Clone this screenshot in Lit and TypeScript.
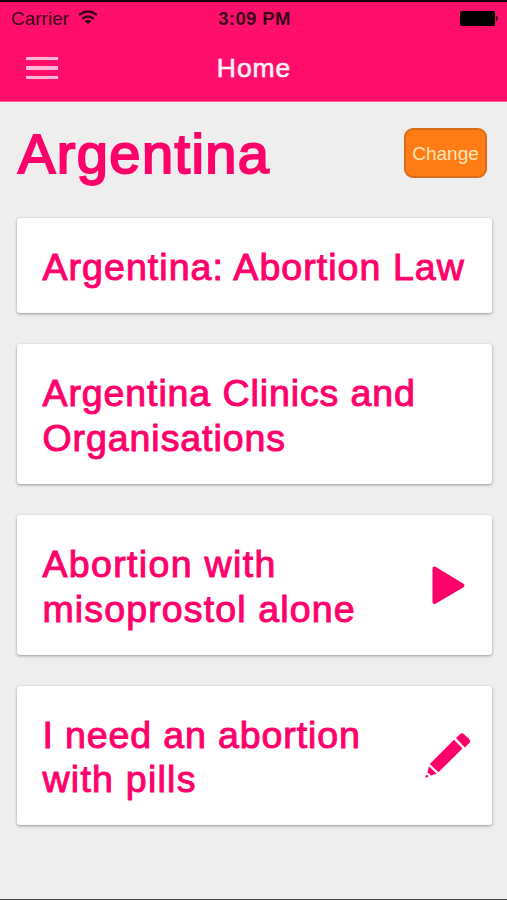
import { LitElement, html, css, svg, nothing } from "lit";
import { customElement, property } from "lit/decorators.js";
import { styleMap } from "lit/directives/style-map.js";

interface Line {
  text: string;
  tracking: number;
}

const playIcon = svg`<path d="M2.5 2.5 L30.5 19.5 L2.5 36 Z" stroke-width="4" stroke-linejoin="round" stroke="currentColor"/>`;
const pencilIcon = svg`
  <path d="M30 5 L34 1.2 Q36 -0.5 38 1.2 L43 5.8 Q45 8 43.3 10 L38.8 14.4 Z"/>
  <path d="M28 6.8 L36.5 15.5 L12.5 39.3 L3.8 31 Z"/>
  <path d="M3 33.3 L10.7 40.8 L4.7 42.6 Q3.8 40.4 1.4 39.8 Z"/>
  <circle cx="0.8" cy="43.2" r="1.3"/>`;

@customElement("topic-card")
class TopicCard extends LitElement {
  @property({ type: Array }) lines: Line[] = [];
  @property() icon = "";

  static styles = css`
    :host {
      display: flex;
      align-items: center;
      justify-content: space-between;
      box-sizing: border-box;
      padding: 27px 19.5px 23.5px 26px;
      background: #fff;
      border-radius: 3px;
      box-shadow: 0 1px 3px rgba(0, 0, 0, 0.38);
      color: #ff006b;
    }
    .title {
      font-size: 37.5px;
      -webkit-text-stroke: 1px #ff006b;
      white-space: nowrap;
    }
    .line { display: block; height: 44.5px; line-height: 44px; }
    svg { display: block; flex: none; overflow: visible; }
    .play { margin: 0 7.5px 3px 0; }
    .pencil { margin-bottom: 4px; }
  `;

  render() {
    return html`
      <div class="title">
        ${this.lines.map((l) => html`<span class="line" style=${styleMap({ letterSpacing: `${l.tracking}px` })}>${l.text}</span>`)}
      </div>
      ${this.icon === "play"
        ? html`<svg class="play" width="33" height="39" viewBox="0 0 33 39" fill="currentColor">${playIcon}</svg>`
        : this.icon === "pencil"
          ? html`<svg class="pencil" width="46" height="45" viewBox="0 0 46 45" fill="currentColor">${pencilIcon}</svg>`
          : nothing}
    `;
  }
}

const topics: { lines: Line[]; icon: string }[] = [
  { lines: [{ text: "Argentina: Abortion Law", tracking: 1.05 }], icon: "" },
  {
    lines: [
      { text: "Argentina Clinics and", tracking: 0.9 },
      { text: "Organisations", tracking: 0.93 },
    ],
    icon: "",
  },
  {
    lines: [
      { text: "Abortion with", tracking: 1.33 },
      { text: "misoprostol alone", tracking: 1.13 },
    ],
    icon: "play",
  },
  {
    lines: [
      { text: "I need an abortion", tracking: 0.88 },
      { text: "with pills", tracking: 1.25 },
    ],
    icon: "pencil",
  },
];

@customElement("app-root")
class AppRoot extends LitElement {
  static styles = css`
    :host {
      display: flex;
      flex-direction: column;
      box-sizing: border-box;
      height: 900px;
      background: #eee;
      border-bottom: 1px solid #444;
      font-family: "Liberation Sans", Arial, sans-serif;
      overflow: hidden;
    }
    header {
      box-sizing: border-box;
      height: 102px;
      flex: none;
      background: #ff0f6b;
      border-top: 2px solid #1c0009;
      border-bottom: 1px solid #f65b98;
    }
    .status, .nav {
      display: grid;
      grid-template-columns: 1fr auto 1fr;
      align-items: center;
    }
    .status {
      height: 32px;
      padding: 0 9px 0 11px;
      color: #38001a;
      font-size: 19px;
    }
    .carrier { display: flex; align-items: center; gap: 8.5px; padding-top: 1px; }
    .carrier svg { margin-top: -3px; }
    .time { font-weight: 700; font-size: 18.5px; letter-spacing: 0.35px; margin: 0 -1px 0 -1px; padding-top: 1px; }
    .battery { justify-self: end; }
    .nav { height: 66px; padding: 0 26px; }
    .menu { display: grid; gap: 6px; width: 32px; padding-top: 2px; }
    .bar { height: 3.5px; background: #ffb5d5; }
    .page {
      color: #fff0f8;
      font-size: 26.5px;
      letter-spacing: 0.9px;
      margin-right: -1px;
      padding-top: 2px;
      -webkit-text-stroke: 0.6px #fff0f8;
    }
    .heading {
      display: flex;
      align-items: center;
      justify-content: space-between;
      height: 116px;
      box-sizing: border-box;
      padding: 0 20.5px 14px 18px;
    }
    h1 {
      margin: 0;
      padding-top: 2px;
      font-size: 56px;
      font-weight: 400;
      line-height: 66px;
      letter-spacing: 1.4px;
      color: #ff006b;
      -webkit-text-stroke: 2px #ff006b;
    }
    button {
      box-sizing: border-box;
      width: 83px;
      height: 50px;
      padding: 1px 0 0 1px;
      border: 2px solid #d96b18;
      border-radius: 9px;
      background: #ff7d14;
      color: #ffe5bd;
      font: 19px "Liberation Sans", Arial, sans-serif;
    }
    .cards { display: grid; gap: 31.25px; padding: 0 15.5px 0 16.5px; }
    svg { display: block; }
  `;

  render() {
    return html`
      <header>
        <div class="status">
          <div class="carrier">
            <span>Carrier</span>
            <svg width="20" height="15" viewBox="0 0 20 15" fill="none" stroke="#38001a" stroke-width="2.4">
              <path d="M1 5 Q10 -2.2 19 5"/>
              <path d="M4.2 8.7 Q10 4.2 15.8 8.7"/>
              <path d="M6.7 11.2 Q10 8.5 13.3 11.2 L10 14.6 Z" fill="#38001a" stroke="none"/>
            </svg>
          </div>
          <div class="time">3:09 PM</div>
          <svg class="battery" width="38" height="15" viewBox="0 0 38 15">
            <rect width="35" height="15" rx="2" fill="#000"/>
            <path d="M35.8 4.5 Q38 5.5 38 7.5 Q38 9.5 35.8 10.5 Z" fill="#38001a"/>
          </svg>
        </div>
        <div class="nav">
          <div class="menu"><div class="bar"></div><div class="bar"></div><div class="bar"></div></div>
          <div class="page">Home</div>
        </div>
      </header>
      <div class="heading">
        <h1>Argentina</h1>
        <button>Change</button>
      </div>
      <div class="cards">
        ${topics.map((t) => html`<topic-card .lines=${t.lines} icon=${t.icon}></topic-card>`)}
      </div>
    `;
  }
}
